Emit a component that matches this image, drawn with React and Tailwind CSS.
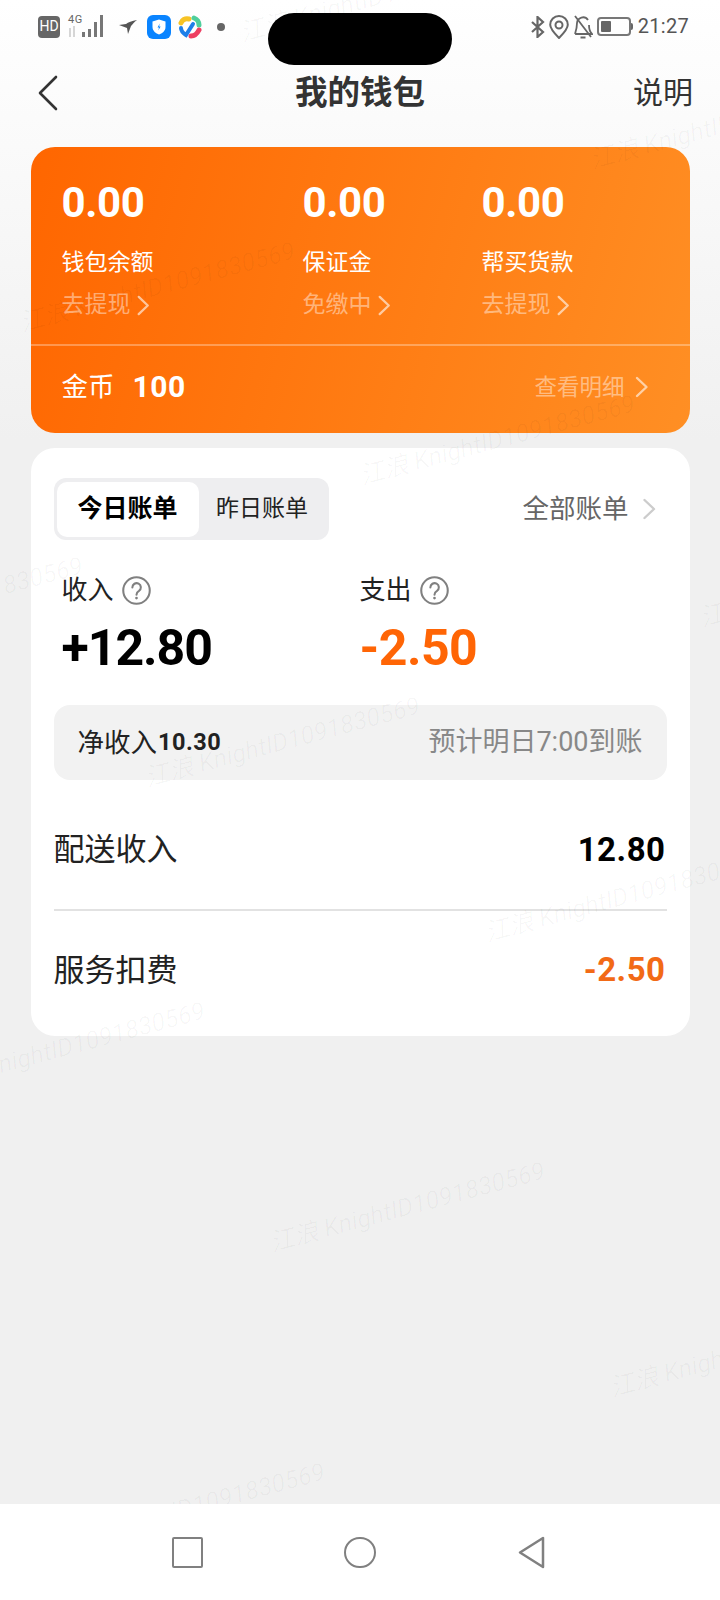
import React from 'react';

const FONT = "font-['Roboto','Noto_Sans_CJK_SC',sans-serif]";

const watermarks = [
  'left-[240px] top-[15px]',
  'left-[20px] top-[305px]',
  'left-[590px] top-[142px]',
  'left-[360px] top-[458px]',
  'left-[-192px] top-[620px]',
  'left-[145px] top-[760px]',
  'left-[485px] top-[915px]',
  'left-[700px] top-[600px]',
  'left-[-70px] top-[1065px]',
  'left-[270px] top-[1225px]',
  'left-[610px] top-[1370px]',
  'left-[50px] top-[1526px]',
];

const Chevron = ({ className }) => (
  <svg className={className} viewBox="0 0 14 22" fill="none" stroke="currentColor" strokeWidth="2.4" strokeLinecap="round" strokeLinejoin="round">
    <path d="M2.5 2 L12 11 L2.5 20" />
  </svg>
);

const Help = ({ className }) => (
  <svg className={className} viewBox="0 0 28 28" fill="none" stroke="#808080" strokeWidth="2">
    <circle cx="14" cy="14" r="12.8" />
    <path d="M10 11 a4.1 4.1 0 1 1 6.4 3.4 c-1.6 1-2.4 1.7-2.4 3.6" strokeLinecap="round" />
    <circle cx="14" cy="21.3" r="1.3" fill="#808080" stroke="none" />
  </svg>
);

const StatusBar = () => (
  <div className="h-[62px] pt-[15px] pl-[38px] pr-[31px] flex items-start justify-between text-[#666]">
    <div className="flex items-center h-[23px]">
      <div className="w-[22px] h-[22px] rounded-[4px] bg-[#666] text-white text-[14px] flex items-center justify-center">HD</div>
      <div className="ml-[8px] w-[37px] h-[23px] relative">
        <span className="absolute left-0 top-[-1px] text-[11px] leading-[12px] text-[#666] tracking-[0.5px]">4G</span>
        <svg className="absolute left-0 top-0 w-[37px] h-[23px]" viewBox="0 0 37 23">
          <path d="M2 13v9M6 11v11" stroke="#ccc" strokeWidth="1.6" />
          <path d="M14 17h3v5h-3zM20 14h3v8h-3zM26 7h3v15h-3zM32 0h3v22h-3z" fill="#777" />
        </svg>
      </div>
      <svg className="ml-[14px] w-[18px] h-[14px]" viewBox="0 0 18 14" fill="#555">
        <path d="M0 5 L7 4 C9 2 13 1 18 0 C15 2 14 4 12 6 L9 14 L8 8 Z" />
      </svg>
      <div className="ml-[10px] w-[24px] h-[24px] rounded-[6px] bg-[#0a84ff] flex items-center justify-center">
        <svg className="w-[14px] h-[16px]" viewBox="0 0 14 16">
          <path d="M7 0.500 L13.500 2.500 V8 C13.500 12 10 14.500 7 15.500 C4 14.500 0.500 12 0.500 8 V2.500 Z" fill="#fff" />
          <path d="M7.800 4.500 L5.500 8.500 H7 L6.300 11.500 L8.600 7.500 H7.100 Z" fill="#0a84ff" />
        </svg>
      </div>
      <svg className="ml-[7px] w-[24px] h-[24px]" viewBox="0 0 24 24" fill="none" strokeWidth="5" strokeLinecap="round">
        <path d="M11 4 C7 3 4 5 3 8" stroke="#f7c325" />
        <path d="M16 3 C19 4 21 7 21 10" stroke="#4fcf9c" />
        <path d="M21 15 C19 19 16 21 13 21" stroke="#ee3f62" />
        <path d="M3 13 C3 15 5 18 8 20 L15 9" stroke="#1f7fe8" strokeWidth="4" />
      </svg>
      <div className="ml-[15px] w-[8px] h-[8px] rounded-full bg-[#666]" />
    </div>

    <div className="flex items-center h-[23px]">
      <svg className="w-[14px] h-[22px]" viewBox="0 0 14 22" fill="none" stroke="#666" strokeWidth="2.200">
        <path d="M1 6 L12 16 L6.500 21 V1 L12 6 L1 16" />
      </svg>
      <svg className="ml-[4px] w-[20px] h-[24px]" viewBox="0 0 20 24" fill="none" stroke="#666" strokeWidth="2">
        <path d="M10 23 C5 18 1.200 14 1.200 9.800 a8.800 8.800 0 0 1 17.600 0 C18.800 14 15 18 10 23 Z" />
        <circle cx="10" cy="10" r="3.500" />
      </svg>
      <svg className="ml-[4px] w-[20px] h-[24px]" viewBox="0 0 20 24" fill="none" stroke="#666" strokeWidth="1.800">
        <path d="M2 19 C3 16 4 13 4 8 a6 6 0 0 1 11 -3 M16 10 C16 14 17 17 19 19 H2" />
        <path d="M2 1 L18 22 M7.500 22.500 h5" />
      </svg>
      <div className="ml-[4px] w-[34px] h-[19px] border-2 border-[#777] rounded-[4px] p-[2px]">
        <div className="w-[10px] h-full bg-[#666] rounded-[1px]" />
      </div>
      <div className="w-[2px] h-[7px] bg-[#666] rounded-r-[2px]" />
      <span className="ml-[5px] text-[20px] leading-[23px] text-[#555] tracking-[0.3px]">21:27</span>
    </div>
  </div>
);

const Balance = ({ amount, label, action, width }) => (
  <div className={width}>
    <div className="text-[42px] leading-[42px] font-bold tracking-[-0.4px] text-white">{amount}</div>
    <div className="mt-[24px] text-[23px] leading-[30px] text-white">{label}</div>
    <div className="mt-[12px] flex items-center text-[23px] leading-[30px] text-white/45">
      {action}
      <Chevron className="ml-[5px] w-[14px] h-[21px] text-white/60" />
    </div>
  </div>
);

export default function App() {
  return (
    <div className={`${FONT} relative w-[720px] h-[1600px] flex flex-col overflow-hidden bg-[linear-gradient(to_bottom,#ffffff_0px,#f0f0f0_440px)]`}>
      <StatusBar />
      {/* camera cutout */}
      <div className="absolute left-[268px] top-[13px] w-[184px] h-[52px] rounded-full bg-black z-20" />

      {/* header */}
      <div className="h-[62px] px-[27px] grid grid-cols-[1fr_auto_1fr] items-center">
        <svg className="ml-[11px] w-[20px] h-[36px]" viewBox="0 0 20 36" fill="none" stroke="#333" strokeWidth="2.600" strokeLinecap="round" strokeLinejoin="round">
          <path d="M18 2 L2 18 L18 34" />
        </svg>
        <div className="text-[32.500px] leading-[40px] font-bold text-[#333]">我的钱包</div>
        <div className="text-[30px] leading-[40px] text-[#333] text-right">说明</div>
      </div>

      <div className="mt-[23px] px-[30.500px]">
        {/* orange balance card */}
        <div className="h-[286px] rounded-[24px] bg-[linear-gradient(105deg,#ff6600_0%,#ff8f24_100%)] flex flex-col">
          <div className="h-[199px] pt-[35px] pl-[31px] flex border-b-2 border-white/30">
            <Balance amount="0.00" label="钱包余额" action="去提现" width="w-[241px]" />
            <Balance amount="0.00" label="保证金" action="免缴中" width="w-[179px]" />
            <Balance amount="0.00" label="帮买货款" action="去提现" width="w-[179px]" />
          </div>
          <div className="flex-1 pl-[31px] pr-[41px] pb-[6px] flex items-center justify-between">
            <div className="flex items-center text-white">
              <span className="text-[26.500px] leading-[34px]">金币</span>
              <span className="ml-[18px] text-[30px] leading-[34px] font-bold tracking-[0.5px]">100</span>
            </div>
            <div className="flex items-center text-[22.500px] leading-[30px] text-white/45">
              查看明细
              <Chevron className="ml-[9px] w-[15px] h-[22px] text-white/60" />
            </div>
          </div>
        </div>

        {/* bills card */}
        <div className="mt-[15px] rounded-[24px] bg-white pt-[30px] pb-[37px] px-[23px]">
          <div className="flex items-center justify-between">
            <div className="w-[275px] h-[62px] rounded-[12px] bg-[#eeeef0] p-[3px] flex items-center">
              <div className="w-[142px] h-[55px] rounded-[10px] bg-white flex items-center justify-center text-[25px] font-bold text-black">今日账单</div>
              <div className="flex-1 flex items-center justify-center text-[23px] text-[#222]">昨日账单</div>
            </div>
            <div className="flex items-center pr-[11px] text-[26.500px] text-[#666]">
              全部账单
              <Chevron className="ml-[13px] w-[14px] h-[22px] text-[#ccc]" />
            </div>
          </div>

          <div className="mt-[35px] flex pl-[8px]">
            <div className="w-[298px]">
              <div className="flex items-center text-[26px] leading-[30px] text-[#222]">
                收入
                <Help className="ml-[8px] w-[29px] h-[29px]" />
              </div>
              <div className="mt-[18px] text-[50px] leading-[50px] font-bold tracking-[-1px] text-black">+12.80</div>
            </div>
            <div>
              <div className="flex items-center text-[26px] leading-[30px] text-[#222]">
                支出
                <Help className="ml-[8px] w-[29px] h-[29px]" />
              </div>
              <div className="mt-[18px] text-[50px] leading-[50px] font-bold tracking-[-0.5px] text-[#ff6505]">-2.50</div>
            </div>
          </div>

          <div className="mt-[32px] h-[75px] rounded-[16px] bg-[#f2f2f2] pl-[24px] pr-[24px] flex items-center justify-between">
            <div className="flex items-center text-[#222]">
              <span className="text-[26.500px]">净收入</span>
              <span className="ml-[1px] text-[23.500px] font-bold tracking-[0.5px]">10.30</span>
            </div>
            <div className="text-[27px] text-[#888]">预计明日7:00到账</div>
          </div>

          <div className="mt-[38px] h-[60px] flex items-center justify-between">
            <span className="pt-[5px] text-[31px] text-[#222]">配送收入</span>
            <span className="pt-[3px] pr-[1px] text-[33px] font-bold text-black tracking-[0.5px]">12.80</span>
          </div>
          <div className="mt-[31px] h-[2px] bg-[#e2e2e2]" />
          <div className="mt-[28px] h-[60px] flex items-center justify-between">
            <span className="pt-[5px] text-[31px] text-[#222]">服务扣费</span>
            <span className="pt-[2px] pr-[1px] text-[33px] font-bold text-[#f26a16] tracking-[0.5px]">-2.50</span>
          </div>
        </div>
      </div>

      <div className="flex-1" />

      {/* system navigation */}
      <div className="relative z-10 h-[96px] bg-white">
        <div className="absolute left-[172px] top-[33px] w-[31px] h-[31px] border-[2.500px] border-[#808080] rounded-[2px]" />
        <div className="absolute left-[344px] top-[33px] w-[32px] h-[31px] border-[2.500px] border-[#808080] rounded-full" />
        <svg className="absolute left-[518px] top-[32px] w-[27px] h-[33px]" viewBox="0 0 27 33" fill="none" stroke="#808080" strokeWidth="2.500" strokeLinejoin="round">
          <path d="M25 2 V31 L2 16.500 Z" />
        </svg>
      </div>

      {/* watermark */}
      <div className="absolute inset-0 overflow-hidden pointer-events-none">
        {watermarks.map((pos) => (
          <div key={pos} className={`absolute ${pos} origin-left -rotate-[15deg] whitespace-nowrap text-[25px] italic text-black/[0.03]`}>
            江浪 KnightID1091830569
          </div>
        ))}
      </div>
    </div>
  );
}
